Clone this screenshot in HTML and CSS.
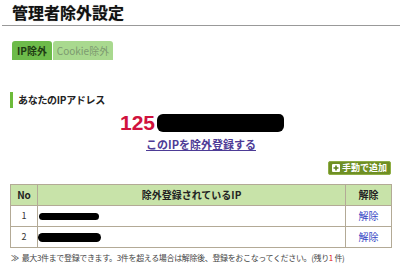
FILE: index.html
```html
<!DOCTYPE html>
<html lang="ja">
<head>
<meta charset="utf-8">
<title>管理者除外設定</title>
<link rel="stylesheet" href="styles.css">
</head>
<body>
<div class="page">
  <h1 class="title">管理者除外設定</h1>
  <div class="tabs">
    <span class="tab tab-active">IP除外</span>
    <span class="tab tab-inactive">Cookie除外</span>
  </div>
  <h2 class="section-head">あなたのIPアドレス</h2>
  <div class="ip-line"><span class="ip-num">125</span><span class="mask mask-ip"></span></div>
  <div class="register"><a href="#" class="register-link">このIPを除外登録する</a></div>
  <div class="add-row"><a href="#" class="add-btn"><span class="plus"><svg width="8" height="8" viewBox="0 0 8 8"><rect width="8" height="8" rx="1" fill="#fff"/><path d="M4 1.5v5M1.5 4h5" stroke="#5c7f1c" stroke-width="1.6"/></svg></span>手動で追加</a></div>
  <table class="ip-table">
    <thead>
      <tr><th class="c-no">No</th><th class="c-ip">除外登録されているIP</th><th class="c-del">解除</th></tr>
    </thead>
    <tbody>
      <tr><td class="c-no">1</td><td class="c-ip"><span class="mask mask-r1"></span></td><td class="c-del"><a href="#" class="del">解除</a></td></tr>
      <tr><td class="c-no">2</td><td class="c-ip"><span class="mask mask-r2"></span></td><td class="c-del"><a href="#" class="del">解除</a></td></tr>
    </tbody>
  </table>
  <p class="note"><span class="chev">≫</span>最大3件まで登録できます。3件を超える場合は解除後、登録をおこなってください。(残り<span class="red">1</span> 件)</p>
</div>
</body>
</html>
```
FILE: styles.css
```css
html, body {
  margin: 0;
  padding: 0;
  background: #fff;
}
body {
  font-family: "Noto Sans CJK JP", "Noto Sans", sans-serif;
  color: #222;
}
.page {
  width: 400px;
  padding-top: 2px;
}
.title {
  margin: 0 0 0 2px;
  padding: 0 0 2px 10px;
  font-size: 16px;
  line-height: 21px;
  font-weight: bold;
  color: #111;
  text-shadow: 0 0 1px #999;
  border-bottom: 1px solid #999;
}
.tabs {
  display: flex;
  gap: 1px;
  margin: 15px 0 0 12px;
}
.tab {
  display: block;
  box-sizing: border-box;
  font-size: 10px;
  line-height: 19px;
  height: 19px;
  padding: 0;
  border-radius: 3px 3px 0 0;
  white-space: nowrap;
  text-align: center;
}
.tab-active {
  background: #6dbb4a;
  color: #1e3a12;
  width: 40px;
  font-weight: bold;
}
.tab-inactive {
  background: #a9d98f;
  color: #7d9a70;
  width: 60px;
  font-weight: normal;
}
.section-head {
  margin: 32px 0 0 10px;
  padding-left: 5px;
  border-left: 3px solid #6dbb3a;
  font-size: 10px;
  line-height: 16px;
  font-weight: bold;
  color: #222;
  letter-spacing: -0.3px;
}
.ip-line {
  display: flex;
  align-items: center;
  margin: 5px 0 0 120px;
  height: 19px;
}
.ip-num {
  font-family: "Liberation Sans", Arial, sans-serif;
  font-size: 21px;
  font-weight: bold;
  color: #d0123d;
  line-height: 19px;
}
.mask {
  display: inline-block;
  background: #000;
}
.mask-ip {
  width: 127px;
  height: 18px;
  margin-left: 2px;
  border-radius: 6px 5px 6px 6px;
}
.register {
  text-align: center;
  margin-top: 5px;
  padding-left: 2px;
  font-size: 11px;
  line-height: 14px;
  height: 14px;
}
.register-link {
  font-size: 11px;
  line-height: 14px;
  font-weight: bold;
  color: #4d3b96;
  text-decoration: underline;
}
.add-row {
  display: flex;
  justify-content: flex-end;
  margin: 10px 9px 0 0;
}
.add-btn {
  display: flex;
  align-items: center;
  gap: 2px;
  height: 12px;
  padding: 0 3px 0 3px;
  background: #6f8f24;
  border: 1px solid #8fae45;
  border-radius: 2px;
  color: #fff;
  font-size: 9px;
  font-weight: bold;
  text-decoration: none;
  line-height: 12px;
}
.plus {
  display: flex;
}
.ip-table {
  margin: 9px 0 0 10px;
  width: 382px;
  border-collapse: collapse;
  font-size: 9px;
}
.ip-table th, .ip-table td {
  border: 1px solid #b3aa96;
  height: 20px;
  padding: 0;
  line-height: 12px;
}
.ip-table th {
  background: #c8e3a9;
  font-weight: bold;
  color: #222;
  font-size: 10px;
}
.c-no {
  width: 26px;
  text-align: center;
}
.ip-table td.c-no {
  color: #333;
}
.c-ip {
  text-align: center;
}
.ip-table td.c-ip {
  text-align: left;
}
.c-del {
  width: 45px;
  text-align: center;
}
.mask-r1 {
  width: 60px;
  height: 7px;
  border-radius: 4px;
  margin-left: 1px;
  vertical-align: middle;
}
.mask-r2 {
  width: 63px;
  height: 9px;
  border-radius: 5px;
  margin-left: 0;
  vertical-align: middle;
}
.del {
  color: #3344c4;
  text-decoration: none;
  font-size: 10px;
}
.note {
  margin: 5px 0 0 11px;
  font-size: 8px;
  line-height: 10px;
  color: #444;
  letter-spacing: -0.35px;
  white-space: nowrap;
}
.chev {
  color: #555;
  font-weight: bold;
  margin-right: 3px;
}
.red {
  color: #e01020;
}
```
